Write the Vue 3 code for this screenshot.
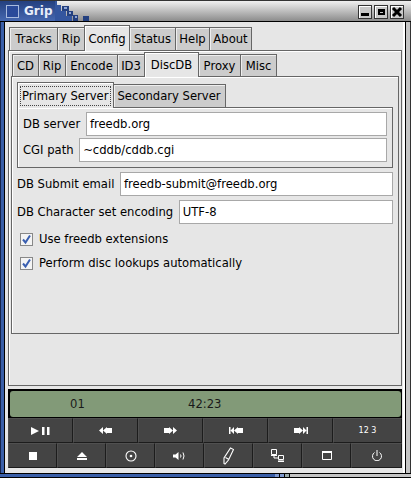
<script setup>
const mainTabs = [
  { label: 'Tracks', w: 49 }, { label: 'Rip', w: 27 }, { label: 'Config', w: 46, active: true },
  { label: 'Status', w: 46 }, { label: 'Help', w: 34 }, { label: 'About', w: 42 }
]
const subTabs = [
  { label: 'CD', w: 27 }, { label: 'Rip', w: 27 }, { label: 'Encode', w: 52 }, { label: 'ID3', w: 27 },
  { label: 'DiscDB', w: 55, active: true }, { label: 'Proxy', w: 42 }, { label: 'Misc', w: 36 }
]
</script>

<template>
  <div class="win">
    <div class="titlebar">
      <div class="title-blue">
        <span class="win-icon"></span>
        <span class="title-text">Grip</span>
      </div>
      <svg class="title-pixels" width="36" height="20" viewBox="0 0 36 20">
        <path fill="#34569f" d="M0 0h2v4h4v6h5v5h6v5H0z" />
        <path fill="#24407f" d="M7 5h7v5H7zM12 10h6v5h-6zM18 14h5v6h-5zM28 15h6v5h-6z" />
        <path fill="#8ea6d8" d="M9 6h3v2H9zM14 11h2v2h-2zM20 15h2v2h-2z" />
      </svg>
      <div class="title-btns">
        <span class="wbtn"><i class="b-min"></i></span>
        <span class="wbtn"><i class="b-max"></i></span>
        <span class="wbtn">
          <svg width="12" height="12" viewBox="0 0 12 12"><path d="M2 2l8 8M10 2l-8 8" stroke="#000" stroke-width="3" /></svg>
        </span>
      </div>
    </div>
    <div class="middle">
      <div class="frame-left"></div>
      <div class="client">
        <div class="tabs tabs-main">
          <div v-for="t in mainTabs" :key="t.label" class="tab" :class="{ active: t.active }" :style="{ width: t.w + 'px' }">{{ t.label }}</div>
        </div>
        <div class="panel-main">
          <div class="tabs tabs-sub">
            <div v-for="t in subTabs" :key="t.label" class="tab" :class="{ active: t.active }" :style="{ width: t.w + 'px' }">{{ t.label }}</div>
          </div>
          <div class="panel-sub">
            <div class="tabs tabs-server">
              <div class="tab active"><span class="focus">Primary Server</span></div>
              <div class="tab">Secondary Server</div>
            </div>
            <div class="panel-server">
              <div class="row">
                <label>DB server</label>
                <div class="entry">freedb.org</div>
              </div>
              <div class="row row-cgi">
                <label>CGI path</label>
                <div class="entry">~cddb/cddb.cgi</div>
              </div>
            </div>
            <div class="row row-email">
              <label>DB Submit email</label>
              <div class="entry">freedb-submit@freedb.org</div>
            </div>
            <div class="row row-charset">
              <label>DB Character set encoding</label>
              <div class="entry">UTF-8</div>
            </div>
            <div class="check check-first">
              <span class="box"><svg width="11" height="11" viewBox="0 0 11 11"><path d="M2 5.500l2.500 3L9 1.500" fill="none" stroke="#3a5fb0" stroke-width="2" /></svg></span>
              <span>Use freedb extensions</span>
            </div>
            <div class="check">
              <span class="box"><svg width="11" height="11" viewBox="0 0 11 11"><path d="M2 5.500l2.500 3L9 1.500" fill="none" stroke="#3a5fb0" stroke-width="2" /></svg></span>
              <span>Perform disc lookups automatically</span>
            </div>
          </div>
        </div>
        <div class="lcd">
          <div class="lcd-face">
            <span class="lcd-track">01</span>
            <span class="lcd-time">42:23</span>
          </div>
        </div>
        <div class="buttons row6">
          <button><svg width="24" height="12" viewBox="0 0 24 12"><path fill="#fff" d="M2 2l8 4-8 4zM13 2h2.500v8H13zM18 2h2.500v8H18z" /></svg></button>
          <button><svg width="13" height="7" viewBox="0 0 13 7"><path fill="#fff" d="M0 3.500L4 0v7zM4 3.500L8 0v7zM8 1h5v5H8z" /></svg></button>
          <button><svg width="13" height="7" viewBox="0 0 13 7"><path fill="#fff" d="M0 1h5v5H0zM5 0l4 3.500L5 7zM9 0l4 3.500L9 7z" /></svg></button>
          <button><svg width="14" height="7" viewBox="0 0 14 7"><path fill="#fff" d="M0 0h1.500v7H0zM1.500 3.500L5 0v7zM5 3.500L9 0v7zM9 1h5v5H9z" /></svg></button>
          <button><svg width="14" height="7" viewBox="0 0 14 7"><path fill="#fff" d="M0 1h5v5H0zM5 0l4 3.500L5 7zM9 0l3.500 3.500L9 7zM12.500 0H14v7h-1.500z" /></svg></button>
          <button class="num">12 3</button>
        </div>
        <div class="buttons row8">
          <button><svg width="8" height="8" viewBox="0 0 8 8"><path fill="#fff" d="M0 0h8v8H0z" /></svg></button>
          <button><svg width="10" height="8" viewBox="0 0 10 8"><path fill="#fff" d="M5 0l5 5H0zM0 6h10v2H0z" /></svg></button>
          <button><svg width="12" height="12" viewBox="0 0 12 12"><circle cx="6" cy="6" r="5" fill="none" stroke="#fff" stroke-width="1.100" /><circle cx="6" cy="6" r="1.300" fill="#fff" /></svg></button>
          <button><svg width="13" height="8" viewBox="0 0 13 8"><path fill="#fff" d="M0 2.500h2.500L5.500 0v8l-3-2.500H0z" /><path fill="none" stroke="#fff" d="M7.500 2.500q1 1.500 0 3M10 .500q2 3.500 0 7" /></svg></button>
          <button><svg width="11" height="18" viewBox="0 0 11 18"><path fill="none" stroke="#fff" stroke-width="1.100" d="M7.500 1l3 1.500-5 10.500L2 17l-1-.5V11zM2.500 10.500l3.500 2" /></svg></button>
          <button><svg width="14" height="14" viewBox="0 0 14 14"><path fill="none" stroke="#fff" d="M.5.500h5v5h-5zM7.500 6.500h5v4h-5zM3 6v3h4" /><path fill="#fff" d="M0 6h6v1H0zM7 11.500h6V13H7z" /></svg></button>
          <button><svg width="10" height="9" viewBox="0 0 10 9"><path fill="#fff" d="M0 0h10v2H0z" /><path fill="none" stroke="#fff" d="M.5.500h9v8h-9z" /></svg></button>
          <button><svg width="10" height="11" viewBox="0 0 10 11"><path fill="none" stroke="#fff" d="M2.500 2.500a4.500 4.500 0 1 0 5 0M5 0v6" /></svg></button>
        </div>
      </div>
      <div class="frame-right"></div>
    </div>
    <div class="bottombar">
      <div class="bottom-blue"></div>
      <svg width="15" height="3" viewBox="0 0 15 3"><path fill="#7f9ad0" d="M0 0h4v3H0zM5 0h4v3H5z" /><path fill="#9aa" d="M10 0h4v3h-4z" /></svg>
      <div class="bottom-grey"></div>
    </div>
  </div>
</template>

<style>
html, body { margin: 0; padding: 0; background: #000; }
</style>

<style scoped>
.win {
  width: 411px;
  height: 478px;
  overflow: hidden;
  display: flex;
  flex-direction: column;
  font-family: "DejaVu Sans", sans-serif;
  font-size: 11.6px;
  color: #000;
  background: #000;
}
.titlebar {
  height: 21px;
  display: flex;
  background: linear-gradient(#f0f0f0, #8c8c8c);
  border-top: 1px solid #333;
  box-sizing: border-box;
}
.title-blue {
  width: 55px;
  display: flex;
  align-items: center;
  background: linear-gradient(#24407f, #4668b0);
}
.win-icon {
  box-sizing: border-box;
  width: 13px;
  height: 13px;
  margin-left: 6px;
  background: #2a4a9a;
  border: 1px solid #a8bade;
}
.title-text {
  margin-left: 5px;
  color: #e8eefa;
  font-weight: bold;
  font-size: 12px;
  line-height: 16px;
}
.title-pixels { flex: none; }
.title-btns {
  display: flex;
  gap: 2px;
  padding: 4px 7px 0 0;
  margin-left: auto;
}
.wbtn {
  box-sizing: border-box;
  width: 14px;
  height: 14px;
  background: #c8c8c8;
  border: 1px solid #333;
  box-shadow: inset 1px 1px 0 #fff;
  display: flex;
  align-items: center;
  justify-content: center;
}
.b-min { display: block; width: 8px; height: 3px; background: #000; margin-top: 5px; }
.b-max { display: block; width: 7px; height: 6px; border: 2px solid #000; border-top-width: 3px; box-sizing: border-box; background: #c8c8c8; }
.middle { flex: 1; display: flex; min-height: 0; border-top: 1px solid #000; }
.frame-left {
  width: 4px;
  box-sizing: border-box;
  background: #3a5fa8;
  border-left: 1px solid #16244c;
  margin-right: 1px;
}
.frame-right {
  width: 5px;
  box-sizing: border-box;
  margin-left: 1px;
  background: #c4c4c4;
  border-right: 1px solid #333;
}
.client {
  width: 400px;
  box-sizing: border-box;
  background: #e6e6e6;
  padding: 3px 3px 0;
  box-shadow: inset -2px 0 0 #fff;
}
.tabs { display: flex; align-items: flex-end; }
.tabs-main { height: 25px; padding-left: 1px; }
.tabs-sub { height: 24px; padding-left: 1px; }
.tabs-server { height: 25px; }
.tab {
  box-sizing: border-box;
  height: calc(100% - 2px);
  padding: 0 4px;
  background: #cccccc;
  border: 1px solid #666;
  border-bottom: 0;
  border-left-width: 0;
  display: flex;
  align-items: center;
  justify-content: center;
  box-shadow: inset 1px 1px 0 #eee;
  white-space: nowrap;
  flex: none;
}
.tab:first-child { border-left-width: 1px; }
.tab.active {
  height: calc(100% + 1px);
  margin-bottom: -1px;
  background: #e6e6e6;
  border-left-width: 1px;
  margin-left: -1px;
  padding: 0 2px;
  box-shadow: inset 1px 1px 0 #fff;
  position: relative;
}
.tab.active:first-child { margin-left: 0; }
.focus { border: 1px dotted #444; padding: 2px 1px; line-height: 14px; }
.panel-main {
  box-sizing: border-box;
  width: 394px;
  height: 336px;
  border: 1px solid #666;
  box-shadow: inset 1px 1px 0 #fff;
  padding: 1px 2px 0;
}
.panel-sub {
  box-sizing: border-box;
  width: 388px;
  height: 258px;
  border: 1px solid #666;
  box-shadow: inset 1px 1px 0 #fff;
  padding: 5px 5px 0;
}
.panel-server {
  box-sizing: border-box;
  width: 376px;
  height: 61px;
  border: 1px solid #666;
  box-shadow: inset 1px 1px 0 #fff;
  padding: 4px 5px 0;
}
.row { display: flex; align-items: center; gap: 5.6px; height: 24px; }
.row label { white-space: nowrap; }
.row-cgi { margin-top: 2px; }
.row-email { margin-top: 4px; }
.row-charset { margin-top: 4px; }
.entry {
  flex: 1;
  box-sizing: border-box;
  height: 24px;
  line-height: 22px;
  padding: 0 3px;
  background: #fff;
  border: 1px solid #a8a8a8;
  white-space: nowrap;
}
.check { display: flex; align-items: center; gap: 6px; height: 24px; padding-left: 3px; }
.check-first { margin-top: 3px; }
.box {
  box-sizing: border-box;
  width: 13px;
  height: 13px;
  background: #f4f4f4;
  border: 1px solid #888;
  display: flex;
  align-items: center;
  justify-content: center;
}
.lcd {
  box-sizing: border-box;
  width: 394px;
  height: 29px;
  margin-top: 3px;
  background: #000;
  padding: 2px 1px 1px 2px;
}
.lcd-face {
  height: 100%;
  background: #829a78;
  border-radius: 3px;
  display: flex;
  align-items: center;
  color: #1a1a1a;
}
.lcd-track { margin-left: 60px; width: 118px; }
.buttons { display: flex; width: 394px; }
.buttons button {
  flex: none;
  min-width: 0;
  height: 25px;
  margin: 0;
  padding: 0;
  background: #444;
  border: 1px solid #1c1c1c;
  border-top-color: #505050;
  border-left-color: #505050;
  color: #fff;
  display: flex;
  align-items: center;
  justify-content: center;
  font-family: inherit;
}
.row6 button { width: 65px; }
.row8 button { width: 49px; }
.buttons button:last-child { flex: 1; }
.buttons .num { font-size: 8px; }
.bottombar {
  height: 5px;
  display: flex;
  box-sizing: border-box;
  border-top: 1px solid #000;
  border-bottom: 1px solid #000;
}
.bottom-blue { width: 275px; background: #3a5fa8; }
.bottom-grey { flex: 1; background: #c4c4c4; }
</style>
